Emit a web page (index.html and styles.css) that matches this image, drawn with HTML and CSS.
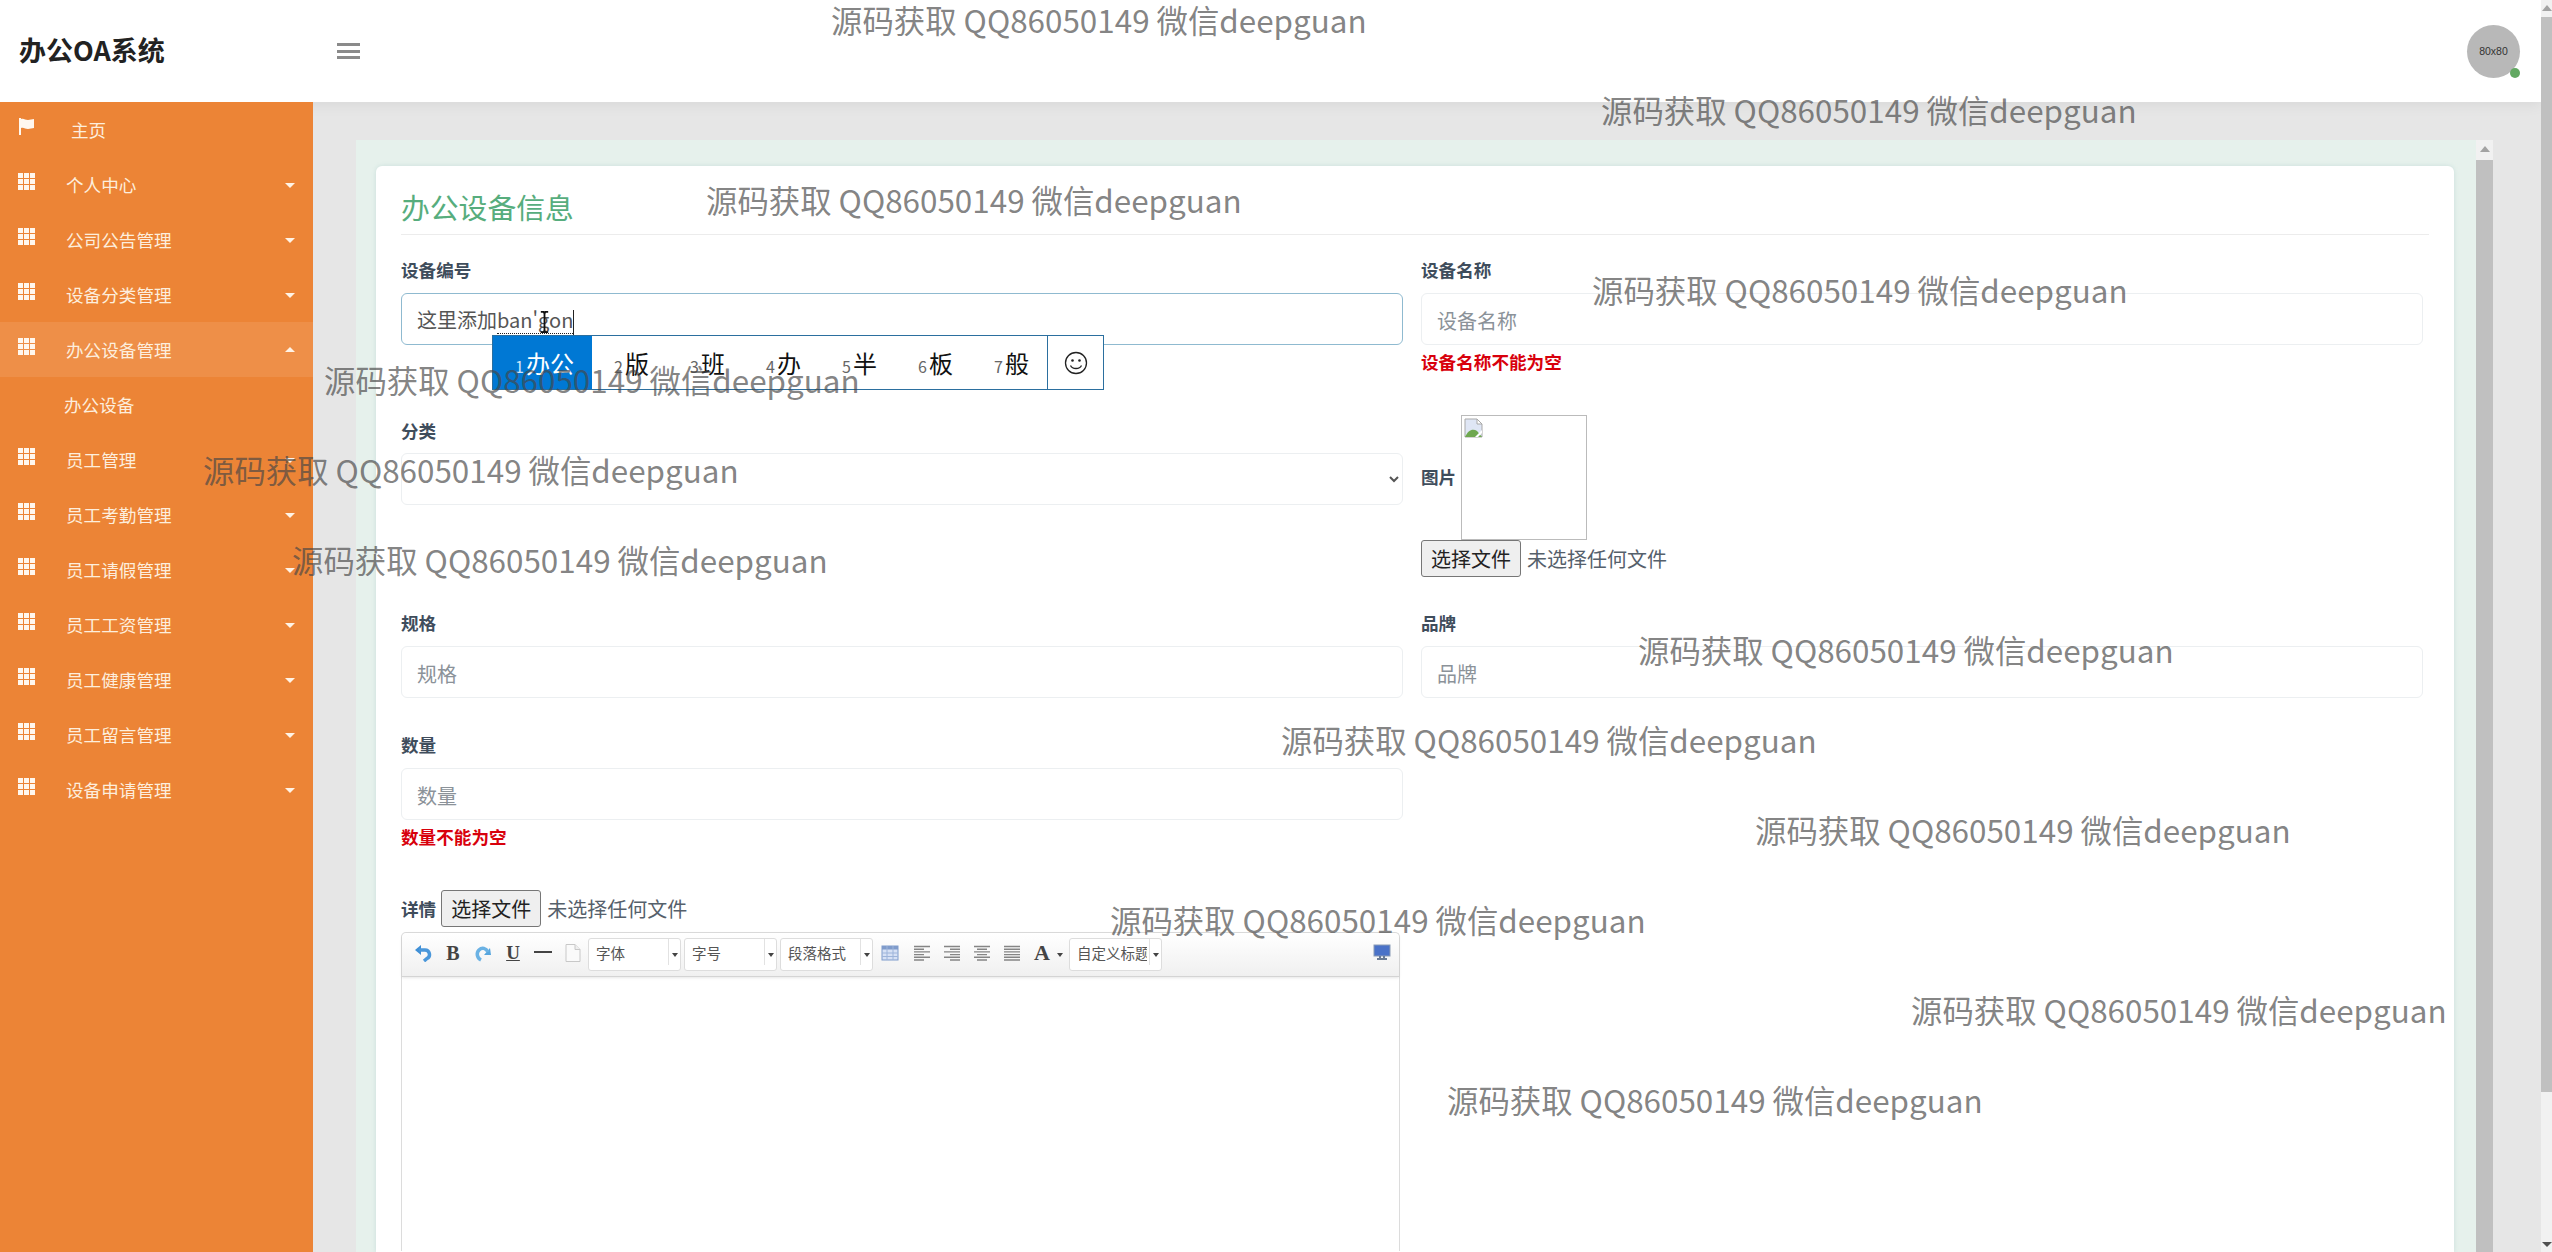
FILE: index.html
```html
<!DOCTYPE html>
<html lang="zh-CN">
<head>
<meta charset="utf-8">
<title>办公OA系统</title>
<link rel="stylesheet" href="styles.css">
</head>
<body>
<div class="app">
  <header class="topbar">
    <div class="brand">办公OA系统</div>
    <button class="burger" aria-label="menu"><i></i><i></i><i></i></button>
    <div class="avatar">80x80<span class="online"></span></div>
  </header>
  <div class="below">
    <nav class="sidebar">
      <a class="nav-item home"><svg class="ico" viewBox="0 0 17 17"><path d="M1 0h2v1c3-1 4 1 7 1l6-1v9l-6 1c-3 0-4-2-7-1v7H1z"/></svg><span>主页</span></a>
      <a class="nav-item"><svg class="ico"><use href="#grid"/></svg><span>个人中心</span><b class="caret"></b></a>
      <a class="nav-item"><svg class="ico"><use href="#grid"/></svg><span>公司公告管理</span><b class="caret"></b></a>
      <a class="nav-item"><svg class="ico"><use href="#grid"/></svg><span>设备分类管理</span><b class="caret"></b></a>
      <a class="nav-item active"><svg class="ico"><use href="#grid"/></svg><span>办公设备管理</span><b class="caret up"></b></a>
      <a class="nav-item sub"><span>办公设备</span></a>
      <a class="nav-item"><svg class="ico"><use href="#grid"/></svg><span>员工管理</span><b class="caret"></b></a>
      <a class="nav-item"><svg class="ico"><use href="#grid"/></svg><span>员工考勤管理</span><b class="caret"></b></a>
      <a class="nav-item"><svg class="ico"><use href="#grid"/></svg><span>员工请假管理</span><b class="caret"></b></a>
      <a class="nav-item"><svg class="ico"><use href="#grid"/></svg><span>员工工资管理</span><b class="caret"></b></a>
      <a class="nav-item"><svg class="ico"><use href="#grid"/></svg><span>员工健康管理</span><b class="caret"></b></a>
      <a class="nav-item"><svg class="ico"><use href="#grid"/></svg><span>员工留言管理</span><b class="caret"></b></a>
      <a class="nav-item"><svg class="ico"><use href="#grid"/></svg><span>设备申请管理</span><b class="caret"></b></a>
    </nav>
    <main class="content">
      <div class="frame">
        <section class="card">
          <h2 class="card-title">办公设备信息</h2>
          <form class="form">
            <div class="field">
              <label class="lbl">设备编号</label>
              <div class="input focused">这里添加<span class="compose">ban'gon</span><i class="text-caret"></i></div>
            </div>
            <div class="field">
              <label class="lbl">设备名称</label>
              <input class="input" placeholder="设备名称">
              <div class="err">设备名称不能为空</div>
            </div>
            <div class="field">
              <label class="lbl">分类</label>
              <select class="input tight"><option></option></select>
            </div>
            <div class="field photo">
              <div class="photo-row">
                <label class="lbl">图片</label>
                <div class="photo-box">
                  <svg class="broken" viewBox="0 0 20 20"><path d="M1 1h12l5 5v13H1z" fill="#dfe6f5" stroke="#a9a9a9"/><path d="M1 19c3-7 8-9 12-6l5 6z" fill="#6fa84f"/><path d="M11 19l7-7v3l-4 4z" fill="#fff"/><path d="M13 1v5h5z" fill="#fff" stroke="#a9a9a9"/></svg>
                </div>
              </div>
              <div class="file-row"><button type="button" class="file-btn">选择文件</button><span class="file-text">未选择任何文件</span></div>
            </div>
            <div class="field">
              <label class="lbl">规格</label>
              <input class="input" placeholder="规格">
            </div>
            <div class="field">
              <label class="lbl">品牌</label>
              <input class="input" placeholder="品牌">
            </div>
            <div class="field">
              <label class="lbl">数量</label>
              <input class="input" placeholder="数量">
              <div class="err">数量不能为空</div>
            </div>
            <div class="field"></div>
            <div class="field editor-field">
              <div class="file-row detail"><label class="lbl">详情</label><button type="button" class="file-btn">选择文件</button><span class="file-text">未选择任何文件</span></div>
              <div class="editor">
                <div class="toolbar">
                  <svg class="tb" viewBox="0 0 18 18"><path d="M7 1L1 6l6 5z" fill="#3f8fd6"/><path d="M5 6h6a4.500 4.500 0 0 1 2 8.500L10 17" fill="none" stroke="#4a97da" stroke-width="3.500"/></svg>
                  <span class="tb tb-b">B</span>
                  <svg class="tb" viewBox="0 0 18 18"><path d="M10 11h7l-1-7z" fill="#57a6de"/><path d="M7 16C3 14 2 9 5 6s7-2 9 2" fill="none" stroke="#6bb2e4" stroke-width="3.500"/></svg>
                  <span class="tb tb-u">U</span>
                  <svg class="tb" viewBox="0 0 18 18"><path d="M0 8h18" stroke="#444" stroke-width="2"/></svg>
                  <svg class="tb tb-page" viewBox="0 0 18 18"><path d="M2 .5h9l5 5v12H2z" fill="#fafafa" stroke="#c8c8c8"/><path d="M11 .5v5h5" fill="#eee" stroke="#c8c8c8"/></svg>
                  <span class="combo"><span class="combo-t">字体</span><b class="combo-a"></b></span>
                  <span class="combo"><span class="combo-t">字号</span><b class="combo-a"></b></span>
                  <span class="combo"><span class="combo-t">段落格式</span><b class="combo-a"></b></span>
                  <svg class="tb tb-table" viewBox="0 0 18 18"><rect x="1" y="2" width="16" height="14" fill="#d6e1f5" stroke="#7f9bcb"/><rect x="1" y="2" width="16" height="3.500" fill="#7f9bcb"/><path d="M1 9h16M1 12.500h16M6 2v14M12 2v14" stroke="#9db4da"/></svg>
                  <svg class="tb" viewBox="0 0 18 18"><path d="M1 2.500h16M1 5.200h10M1 7.900h16M1 10.600h10M1 13.300h16M1 16h10" stroke="#858585" stroke-width="1.400"/></svg>
                  <svg class="tb" viewBox="0 0 18 18"><path d="M1 2.500h16M7 5.200h10M1 7.900h16M7 10.600h10M1 13.300h16M7 16h10" stroke="#858585" stroke-width="1.400"/></svg>
                  <svg class="tb" viewBox="0 0 18 18"><path d="M1 2.500h16M4 5.200h10M1 7.900h16M4 10.600h10M1 13.300h16M4 16h10" stroke="#858585" stroke-width="1.400"/></svg>
                  <svg class="tb" viewBox="0 0 18 18"><path d="M1 2.500h16M1 5.200h16M1 7.900h16M1 10.600h16M1 13.300h16M1 16h16" stroke="#858585" stroke-width="1.400"/></svg>
                  <span class="tb tb-a">A</span><b class="a-caret"></b>
                  <span class="combo"><span class="combo-t">自定义标题</span><b class="combo-a"></b></span>
                  <svg class="tb tb-full" viewBox="0 0 18 18"><rect x="1" y="2" width="16" height="11" fill="#4a72c8" stroke="#8a9bb5"/><path d="M7 13v2M11 13v2M4 16h10" stroke="#6b7c95" stroke-width="2"/></svg>
                </div>
                <div class="edit-area"></div>
              </div>
            </div>
          </form>
        </section>
        <div class="scroll inner"><span class="arrow"></span><span class="thumb"></span></div>
      </div>
    </main>
  </div>
  <div class="scroll outer"><span class="arrow"></span><span class="thumb"></span><span class="arrow down"></span></div>
</div>

<div class="ime">
  <span class="cand sel"><small>1</small>办公</span>
  <span class="cand"><small>2</small>版</span>
  <span class="cand"><small>3</small>班</span>
  <span class="cand"><small>4</small>办</span>
  <span class="cand"><small>5</small>半</span>
  <span class="cand"><small>6</small>板</span>
  <span class="cand"><small>7</small>般</span>
  <span class="smile"><svg viewBox="0 0 24 24"><circle cx="12" cy="12" r="10.500" fill="none" stroke="#222" stroke-width="1.300"/><circle cx="8.500" cy="9.500" r="1.300" fill="#222"/><circle cx="15.500" cy="9.500" r="1.300" fill="#222"/><path d="M6.500 14.500c2 4 9 4 11 0" fill="none" stroke="#222" stroke-width="1.300"/></svg></span>
</div>
<svg class="ibeam" viewBox="0 0 12 24"><path d="M2 1h3l1 2 1-2h3M6 3v18M2 23h3l1-2 1 2h3" fill="none" stroke="#111" stroke-width="2"/></svg>

<span class="wm w1">源码获取 QQ86050149 微信deepguan</span>
<span class="wm w2">源码获取 QQ86050149 微信deepguan</span>
<span class="wm w3">源码获取 QQ86050149 微信deepguan</span>
<span class="wm w4">源码获取 QQ86050149 微信deepguan</span>
<span class="wm w5">源码获取 QQ86050149 微信deepguan</span>
<span class="wm w6">源码获取 QQ86050149 微信deepguan</span>
<span class="wm w7">源码获取 QQ86050149 微信deepguan</span>
<span class="wm w8">源码获取 QQ86050149 微信deepguan</span>
<span class="wm w9">源码获取 QQ86050149 微信deepguan</span>
<span class="wm w10">源码获取 QQ86050149 微信deepguan</span>
<span class="wm w11">源码获取 QQ86050149 微信deepguan</span>
<span class="wm w12">源码获取 QQ86050149 微信deepguan</span>
<span class="wm w13">源码获取 QQ86050149 微信deepguan</span>

<svg class="defs" width="0" height="0"><symbol id="grid" viewBox="0 0 17 17"><path d="M0 0h5v5H0zM6 0h5v5H6zM12 0h5v5h-5zM0 6h5v5H0zM6 6h5v5H6zM12 6h5v5h-5zM0 12h5v5H0zM6 12h5v5H6zM12 12h5v5h-5z"/></symbol></svg>
</body>
</html>
```
FILE: styles.css
```css
* { box-sizing: border-box; }
html, body { margin: 0; height: 100%; overflow: hidden; }
body { font-family: "Noto Sans CJK SC", "Noto Sans", sans-serif; color: #55606b; background: #e6e6e6; position: relative; }
.app { height: 1252px; display: flex; flex-direction: column; padding-right: 11px; overflow: hidden; }

.topbar { height: 102px; flex: none; background: #fff; display: flex; align-items: center; position: relative; z-index: 2; box-shadow: 0 2px 14px rgba(0, 0, 0, .07); }
.brand { width: 337px; padding: 0 0 4px 19px; font-size: 27px; font-weight: 700; color: #222; }
.burger { width: 23px; height: 16px; padding: 0; border: 0; background: none; display: flex; flex-direction: column; justify-content: space-between; }
.burger i { display: block; height: 3px; background: #8a8a8a; }
.avatar { margin-left: auto; margin-right: 21px; width: 53px; height: 53px; border-radius: 50%; background: #b8b8b8; color: #333; font: 10.500px "Liberation Sans", sans-serif; display: flex; align-items: center; justify-content: center; position: relative; }
.online { position: absolute; right: 0; bottom: 0; width: 10px; height: 10px; border-radius: 50%; background: #62a862; }

.below { flex: 1; display: flex; min-height: 0; }
.sidebar { width: 313px; flex: none; background: #ec8436; color: #fdeedd; font-size: 17.600px; display: flex; flex-direction: column; position: relative; z-index: 3; }
.nav-item { height: 55px; flex: none; display: flex; align-items: center; padding-left: 18px; position: relative; }
.nav-item span { margin: -1px 0 0 31px; }
.nav-item.home span { margin-left: 36px; }
.nav-item.active { background: #ee8f48; }
.nav-item.sub span { margin-left: 46px; }
.ico { width: 17px; height: 17px; fill: #fff7ee; flex: none; margin-top: -6px; }
.caret { position: absolute; left: 285px; top: 26px; border-style: solid; border-color: #fff3e6 transparent transparent; border-width: 5px 5px 0; width: 0; height: 0; }
.caret.up { border-color: transparent transparent #fff3e6; border-width: 0 5px 5px; top: 25px; }

.content { flex: 1; min-width: 0; padding: 38px 0 0 43px; overflow: hidden; }
.frame { width: 2137px; height: 100%; background: #e6f1ec; display: flex; padding: 26px 0 0 20px; }
.card { width: 2078px; flex: none; background: #fff; border-radius: 6px 6px 0 0; padding: 0 25px; box-shadow: 0 0 4px rgba(120, 170, 170, .25); }
.card-title { margin: 0; height: 69px; padding-top: 16px; font-size: 28.800px; line-height: 50px; font-weight: 400; color: #57ad7d; border-bottom: 1px solid #ececec; }
.scroll { background: #f1f1f1; display: flex; flex-direction: column; align-items: center; flex: none; }
.scroll .arrow { height: 20px; width: 100%; flex: none; display: flex; justify-content: center; padding-top: 6px; }
.scroll .arrow::before { content: ""; border-style: solid; border-color: transparent transparent #a3a3a3; border-width: 0 5px 6px; width: 0; height: 0; }
.scroll .thumb { flex: 1; width: 100%; background: #c0c0c0; }
.scroll.inner { width: 17px; margin-left: 22px; margin-top: -26px; }
.scroll.outer { position: absolute; right: 0; top: 0; bottom: 0; width: 11px; z-index: 4; }
.scroll.outer .arrow { height: 17px; padding-top: 5px; }
.scroll.outer .thumb { flex: none; height: 1075px; }
.scroll.outer .arrow.down { margin-top: auto; padding-top: 7px; }
.scroll.outer .arrow.down::before { border-color: #505050 transparent transparent; border-width: 5px 5px 0; }

.form { display: grid; grid-template-columns: 1002px 1002px; column-gap: 18px; grid-template-rows: 161px 192px 122px 157px auto; padding-top: 23px; }
.lbl { display: block; font-size: 17.600px; line-height: 24px; font-weight: 700; color: #3f4d5c; }
.input { display: block; width: 100%; height: 52px; margin-top: 11px; padding: 2px 15px 0; border: 1px solid #eceff1; border-radius: 6px; background: #fff; font: 400 20px "Noto Sans CJK SC", sans-serif; color: #555; outline: none; }
.input.tight { margin-top: 10px; }
.input::placeholder { color: #8b9299; opacity: 1; }
.input.focused { border-color: #8fbad0; line-height: 48px; white-space: nowrap; position: relative; }
.compose { border-bottom: 1px dotted #222; display: inline-block; line-height: 26px; }
.text-caret { display: inline-block; width: 1px; height: 26px; background: #222; vertical-align: middle; }
.err { font-size: 17.600px; line-height: 24px; font-weight: 700; color: #d8000c; margin-top: 5px; }

.photo { margin-top: -4px; }
.photo-row { display: flex; align-items: center; gap: 5px; }
.photo-row .lbl { margin-top: -2px; }
.photo-box { width: 126px; height: 125px; border: 1px solid #bbb; padding: 2px; }
.broken { display: block; width: 20px; height: 20px; }
.file-row { display: flex; align-items: center; }
.file-btn { height: 37px; width: 100px; padding: 0; font: 400 20px "Noto Sans CJK SC", sans-serif; color: #222; background: #efefef; border: 1px solid #767676; border-radius: 3px; }
.file-text { margin-left: 6px; font-size: 20px; color: #55606b; }
.detail { height: 37px; margin-bottom: 5px; }
.detail .lbl { margin-right: 5px; }

.editor { border: 1px solid #dcdcdc; border-bottom: 0; border-radius: 5px 5px 0 0; width: 999px; background: #fff; }
.toolbar { height: 44px; display: flex; align-items: center; position: relative; background: linear-gradient(#fff, #f0f0f0); border-bottom: 1px solid #d4d4d4; border-radius: 5px 5px 0 0; box-shadow: 0 1px 3px rgba(0,0,0,.1); padding-left: 12px; }
.tb { width: 18px; height: 18px; flex: none; margin: -3px 12px 0 0; font-family: "Liberation Serif", serif; font-size: 20px; line-height: 18px; color: #444; text-align: center; }
.tb-b { font-weight: 700; }
.tb-u { text-decoration: underline; font-weight: 700; font-size: 19px; }
.tb-page { margin-right: 6px; }
.tb-table { margin-left: 5px; margin-right: 14px; }
.tb-a { font-size: 22px; font-weight: 700; margin-right: 6px; }
.a-caret { border-style: solid; border-color: #444 transparent transparent; border-width: 4px 3px 0; margin-right: 6px; }
.tb-full { position: absolute; right: 8px; top: 10px; margin: 0; }
.combo { height: 33px; width: 93px; margin-right: 3px; display: flex; align-items: center; background: #fff; border: 1px solid #ddd; border-radius: 3px; flex: none; position: relative; overflow: hidden; }
.combo-t { font-size: 14.500px; padding: 0 0 4px 7px; color: #555; white-space: nowrap; overflow: hidden; width: 77px; }
.combo-a { position: absolute; right: 0; top: 0; bottom: 5px; width: 12px; border-left: 1px solid #e2e2e2; }
.combo-a::after { content: ""; position: absolute; left: 3px; top: 14px; border-style: solid; border-color: #444 transparent transparent; border-width: 4px 3px 0; }
.edit-area { height: 274px; }

.ime { position: absolute; left: 492px; top: 335px; width: 612px; height: 55px; display: flex; align-items: center; background: #fff; border: 1px solid #2b6f9f; font-size: 24px; color: #111; z-index: 5; }
.cand { width: 76px; flex: none; height: 100%; display: flex; align-items: center; padding-left: 22px; white-space: nowrap; }
.cand small { font-size: 16px; color: #666; margin-right: 2px; margin-top: 6px; }
.cand.sel { background: #0078d4; color: #fff; width: 99px; }
.cand.sel small { color: #cfe4f7; }
.smile { position: absolute; right: 0; top: 0; bottom: 0; width: 56px; border-left: 1px solid #2b6f9f; display: flex; align-items: center; justify-content: center; }
.smile svg { width: 24px; height: 24px; }
.ibeam { position: absolute; left: 539px; top: 310px; width: 11px; height: 24px; z-index: 6; }

.wm { position: absolute; z-index: 7; font-size: 31.400px; line-height: 42px; color: rgba(70, 70, 70, .68); white-space: nowrap; font-family: "Noto Sans CJK SC", sans-serif; pointer-events: none; }
.w1 { left: 831px; top: -1px; }
.w2 { left: 1601px; top: 89px; }
.w3 { left: 706px; top: 179px; }
.w4 { left: 1592px; top: 269px; }
.w5 { left: 324px; top: 359px; }
.w6 { left: 203px; top: 449px; }
.w7 { left: 292px; top: 539px; }
.w8 { left: 1638px; top: 629px; }
.w9 { left: 1281px; top: 719px; }
.w10 { left: 1755px; top: 809px; }
.w11 { left: 1110px; top: 899px; }
.w12 { left: 1911px; top: 989px; }
.w13 { left: 1447px; top: 1079px; }
.defs { position: absolute; }
```
